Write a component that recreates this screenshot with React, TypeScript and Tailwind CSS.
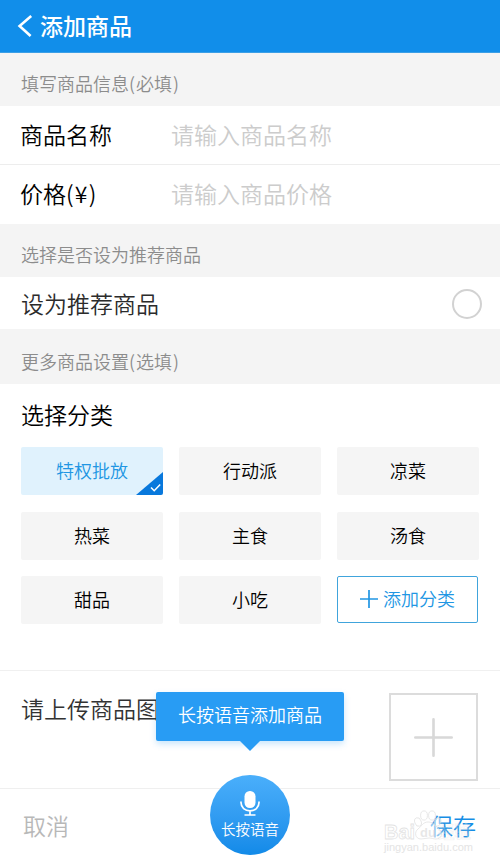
import { useState } from 'react';

const categories = ['特权批放', '行动派', '凉菜', '热菜', '主食', '汤食', '甜品', '小吃'];

function SectionTitle({ children, note, className }: { children: string; note?: string; className: string }) {
  return (
    <div className={`bg-[#f4f4f4] pl-[21px] text-[18px] font-[350] text-[#8c8c8c] shrink-0 ${className}`}>
      {children}
      {note && (
        <>
          <span className="tracking-[1px]">(</span>{note}<span className="pl-[1px]">)</span>
        </>
      )}
    </div>
  );
}

function Watermark() {
  return (
    <svg
      className="absolute left-[380px] top-[16px] pointer-events-none"
      width="120"
      height="52"
      viewBox="0 0 120 52"
      aria-hidden="true"
    >
      <g fill="#ffffff" fillOpacity="0.5" stroke="#d9d9d9" strokeOpacity="0.75" strokeWidth="0.8">
        <ellipse cx="38" cy="17" rx="3.2" ry="4.4" transform="rotate(-20 38 17)" />
        <ellipse cx="44" cy="10.5" rx="3.4" ry="4.6" />
        <ellipse cx="52" cy="10.5" rx="3.4" ry="4.6" />
        <ellipse cx="57.5" cy="17" rx="3.2" ry="4.4" transform="rotate(20 57.5 17)" />
        <path d="M48 17c-5 0-6 4-10 7-4 3-3 10 3 10 3 0 5-1 8-1s4 1 7 1c6 0 7-6 3-10-4-3-5-7-11-7z" />
        <g fontFamily="Liberation Sans, Noto Sans CJK SC, sans-serif" fontWeight="700" fontSize="21">
          <text x="4" y="34" fontSize="20" textLength="31" lengthAdjust="spacingAndGlyphs">Bai</text>
          <text x="40" y="32" fontSize="13" fill="#d0d0d0" stroke="none">du</text>
          <text x="58" y="33" fontSize="17" fillOpacity="0.2" strokeOpacity="0.3" textLength="33" lengthAdjust="spacingAndGlyphs">经验</text>
          <text x="4" y="46" fontSize="11" fontWeight="400" fill="#e4e4e4" fillOpacity="1" stroke="none" textLength="89" lengthAdjust="spacingAndGlyphs">
            jingyan.baidu.com
          </text>
        </g>
      </g>
    </svg>
  );
}

export default function App() {
  const [selected, setSelected] = useState('特权批放');
  const [name, setName] = useState('');
  const [price, setPrice] = useState('');

  return (
    <div className="w-[500px] h-[864px] overflow-hidden flex flex-col bg-white text-black font-['Noto_Sans_CJK_SC',sans-serif]">
      {/* Header */}
      <header className="h-[53px] shrink-0 bg-[#118eea] border-b border-[#3c9fe6] flex items-center pl-[17px] text-white">
        <svg width="16" height="22" viewBox="0 0 16 22" fill="none" stroke="currentColor" strokeWidth="2.6">
          <path d="M14.2 1L2.6 11l11 10" />
        </svg>
        <h1 className="ml-[7px] pb-[2px] text-[23px] leading-[50px] font-medium">添加商品</h1>
      </header>

      <SectionTitle className="h-[53px] leading-[61px]" note="必填">填写商品信息</SectionTitle>

      {/* Required fields */}
      <div className="h-[59px] shrink-0 flex items-center pl-[20px] pb-[2px] border-b border-[#ededed] text-[23px] font-[350]">
        <label htmlFor="name" className="w-[151px]">商品名称</label>
        <input
          id="name"
          value={name}
          onChange={e => setName(e.target.value)}
          placeholder="请输入商品名称"
          className="w-[250px] outline-none placeholder:text-[#cccccc]"
        />
      </div>
      <div className="h-[59px] shrink-0 flex items-center pl-[20px] pb-[2px] text-[23px] font-[350]">
        <label htmlFor="price" className="w-[151px]">价格<span className="tracking-[1.2px]">(¥)</span></label>
        <input
          id="price"
          value={price}
          onChange={e => setPrice(e.target.value)}
          placeholder="请输入商品价格"
          className="w-[250px] outline-none placeholder:text-[#cccccc]"
        />
      </div>

      <SectionTitle className="h-[53px] leading-[61px]">选择是否设为推荐商品</SectionTitle>

      <div className="h-[52px] shrink-0 flex items-center justify-between pl-[21px] pr-[18px]">
        <span className="text-[23px] font-[350] text-[#2b2b2b]">设为推荐商品</span>
        <button className="mt-[1px] w-[30px] h-[30px] rounded-full border-2 border-[#d2d2d2]" aria-label="设为推荐商品" />
      </div>

      <SectionTitle className="h-[55px] leading-[65px]" note="选填">更多商品设置</SectionTitle>

      {/* Categories */}
      <div className="h-[287px] shrink-0 border-b border-[#f0f0f0] px-[21px]">
        <h2 className="h-[63px] leading-[60px] text-[23px] font-[350]">选择分类</h2>
        <div className="grid grid-cols-3 gap-x-4 gap-y-[16.5px]">
          {categories.map(category => (
            <button
              key={category}
              onClick={() => setSelected(category)}
              className={`relative h-12 rounded-[2px] overflow-hidden text-[18px] leading-[46px] pb-[2px] font-[350] ${
                selected === category ? 'bg-[#e0f2fd] text-[#2196e3]' : 'bg-[#f5f5f5]'
              }`}
            >
              {category}
              {selected === category && (
                <svg className="absolute right-0 bottom-0" width="27" height="24" viewBox="0 0 27 24">
                  <path d="M27 1v23H0z" fill="#0878dc" />
                  <path d="M15 16.5l3.2 3.2 6-6.2" fill="none" stroke="#fff" strokeWidth="1.5" />
                </svg>
              )}
            </button>
          ))}
          <button className="w-[141px] h-[47px] pb-[2px] rounded-[2px] border-[1.5px] border-[#40a4dc] flex items-center justify-center gap-[5px] text-[18px] font-[350] text-[#2196e3]">
            <svg width="18" height="18" viewBox="0 0 18 18" stroke="currentColor" strokeWidth="1.7">
              <path d="M9 0v18M0 9h18" />
            </svg>
            添加分类
          </button>
        </div>
      </div>

      {/* Image upload */}
      <div className="relative h-[118px] shrink-0 border-b border-[#efefef] flex justify-between pl-[21px] pr-[22px]">
        <span className="pt-[20px] text-[23px] leading-[34px] font-[350] text-[#333]">请上传商品图片</span>
        <button className="mt-[22px] w-[89px] h-[88px] border-2 border-[#dcdcdc] flex items-center justify-center">
          <svg width="39" height="39" viewBox="0 0 39 39" stroke="#d8d8d8" strokeWidth="2.6" strokeLinecap="round">
            <path d="M19.5 1.3v36.4M1.3 19.5h36.4" />
          </svg>
        </button>
        <div className="absolute left-[156px] top-[21px] w-[188px] h-[49px] rounded-[2px] bg-[#289cf4] shadow-[0_3px_6px_rgba(40,156,244,0.25)] text-white text-[18px] leading-[45px] font-[350] text-center">
          长按语音添加商品
          <svg className="absolute left-[83px] top-[48px]" width="22" height="12" viewBox="0 0 22 12">
            <path d="M0 0h22L11 11z" fill="#289cf4" />
          </svg>
        </div>
      </div>

      {/* Bottom bar */}
      <footer className="relative h-[75px] shrink-0 flex items-center justify-between pl-[23px] pr-[24px] pb-[2px] text-[23px] font-[350]">
        <button className="text-[#b8b8b8]">取消</button>
        <button className="text-[#168ee5]">保存</button>
        <button className="absolute left-[210px] top-[-14px] w-20 h-20 rounded-full bg-linear-to-b from-[#4aaffb] to-[#118ae8] flex flex-col items-center text-white">
          <svg className="mt-[16px]" width="20" height="25" viewBox="0 0 20 25">
            <rect x="4.5" y="0" width="11" height="17" rx="5.3" fill="#fff" />
            <path
              d="M1 10.5v1c0 5 4 8.3 9 8.3s9-3.3 9-8.3v-1M10 20v3.5M4.5 24h11"
              fill="none"
              stroke="#fff"
              strokeWidth="1.7"
            />
          </svg>
          <span className="mt-[3px] text-[14.5px] leading-[20px]">长按语音</span>
        </button>
        <Watermark />
      </footer>
    </div>
  );
}
